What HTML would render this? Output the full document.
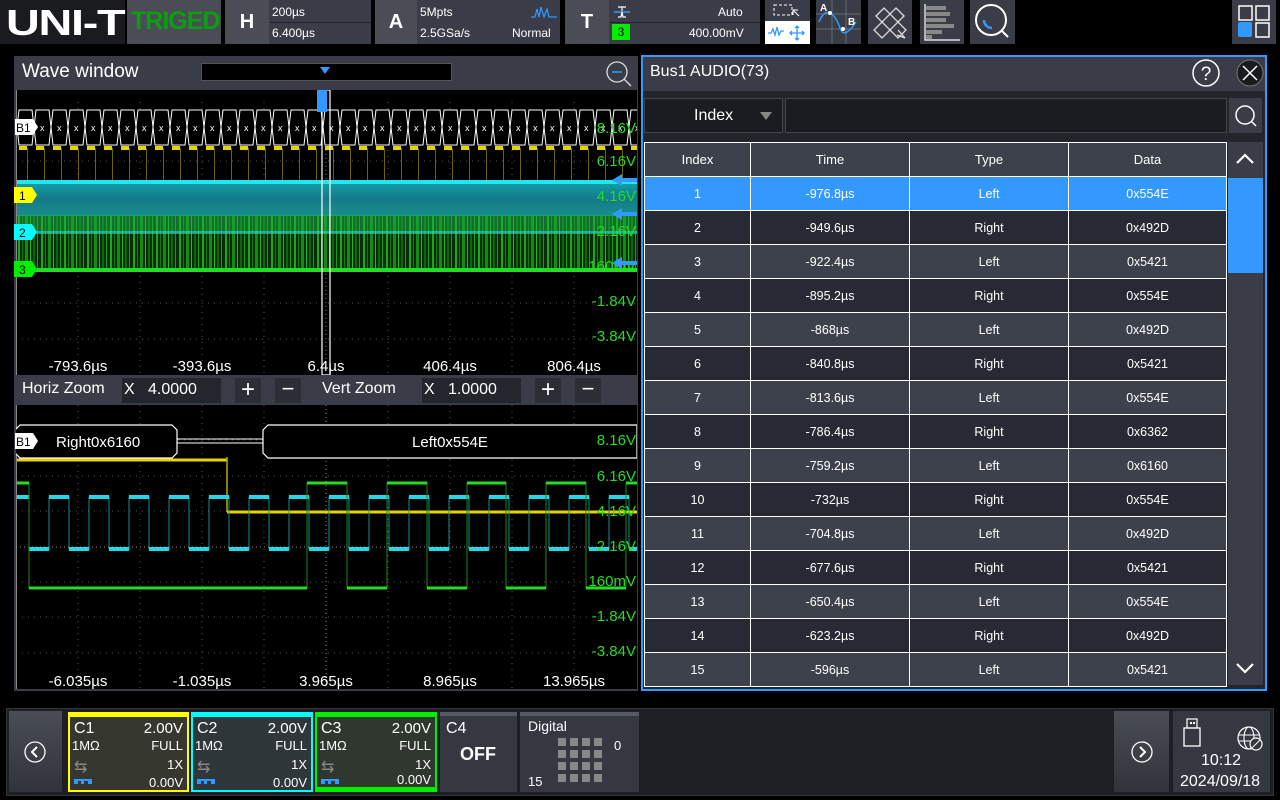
<!DOCTYPE html>
<html><head><meta charset="utf-8"><style>
*{box-sizing:border-box;margin:0;padding:0}
body{width:1280px;height:800px;background:#000;font-family:"Liberation Sans",sans-serif;color:#fff;position:relative;overflow:hidden}
.a{position:absolute}
.tb{position:absolute;top:0;height:44px;background:#3a3d47}
.lt{font-size:12px;color:#fff}
table{border-collapse:collapse;position:absolute;left:644px;top:142px;width:583px;font-size:12.5px;text-align:center}
td,th{border:1.5px solid #fff;height:34px;font-weight:normal}
th{background:#3d414b;font-size:13px}
tr.o td{background:#3d414b}
tr.e td{background:#272a34}
tr.s td{background:#3399ff}
.ch{position:absolute;top:712px;height:80px;background:#353833;font-size:14px}
.ch .r{position:absolute;right:4px}
.ch .l{position:absolute;left:4px}
.gl{font-size:15px;fill:#22dd22;font-family:"Liberation Sans",sans-serif}
.tl{font-size:15px;fill:#fff;font-family:"Liberation Sans",sans-serif}
</style></head><body>

<div class="a" style="left:0;top:0;width:125px;height:44px;background:#1a1b1f"></div>
<div class="a" style="left:6px;top:2px;font-size:36px;font-weight:bold;letter-spacing:-1px;color:#fff;transform:scaleX(1.3);transform-origin:left">UNI-T</div>
<div class="tb" style="left:127px;width:94px;background:#4a4d56"><div style="position:absolute;left:4px;top:7px;font-size:25px;font-weight:bold;color:#0c9d10;letter-spacing:-1px">TRIGED</div></div>

<div class="tb" style="left:225px;width:146px"></div>
<div class="a" style="left:225px;top:0;width:44px;height:44px;background:#4a4d56;font-size:20px;font-weight:bold;text-align:center;line-height:44px">H</div>
<div class="a" style="left:270px;top:22px;width:101px;height:1px;background:#22242a"></div>
<div class="a lt" style="left:272px;top:5px">200µs</div>
<div class="a lt" style="left:272px;top:26px">6.400µs</div>

<div class="tb" style="left:375px;width:185px"></div>
<div class="a" style="left:375px;top:0;width:42px;height:44px;background:#4a4d56;font-size:20px;font-weight:bold;text-align:center;line-height:44px">A</div>
<div class="a lt" style="left:420px;top:5px">5Mpts</div>
<div class="a lt" style="left:420px;top:26px">2.5GSa/s</div>
<div class="a lt" style="left:512px;top:26px">Normal</div>
<svg class="a" style="left:530px;top:5px" width="28" height="14"><path d="M1 12h4l2-8 2 8 2-10 3 10 3-8 2 8h8" stroke="#3399ff" fill="none" stroke-width="1.2"/></svg>

<div class="tb" style="left:565px;width:195px"></div>
<div class="a" style="left:565px;top:0;width:44px;height:44px;background:#4a4d56;font-size:20px;font-weight:bold;text-align:center;line-height:44px">T</div>
<div class="a" style="left:610px;top:22px;width:150px;height:1px;background:#22242a"></div>
<svg class="a" style="left:612px;top:4px" width="20" height="16"><path d="M2 8h16" stroke="#3399ff" stroke-width="1.5"/><path d="M6 3h8M10 3v4M6 13h3l1-5 1 5h3" stroke="#fff" fill="none" stroke-width="1.2"/></svg>
<div class="a" style="left:612px;top:24px;width:18px;height:16px;background:#00ee00;color:#000;font-size:12px;text-align:center;line-height:16px">3</div>
<div class="a lt" style="left:718px;top:5px">Auto</div>
<div class="a lt" style="left:689px;top:26px">400.00mV</div>

<div class="tb" style="left:765px;width:45px"></div>
<svg class="a" style="left:765px;top:0" width="45" height="44"><rect x="0" y="21" width="45" height="23" fill="#fff"/><rect x="9" y="5" width="18" height="10" fill="none" stroke="#fff" stroke-dasharray="3 2"/><path d="M28 10l6 6M28 10v5M28 10h5" stroke="#fff"/><path d="M3 33h3l2-4 2 6 2-8 2 8 2-4h3" stroke="#3399ff" fill="none" stroke-width="1.3"/><path d="M32 26v14M25 33h14M30 28l2-2 2 2M30 38l2 2 2-2M27 31l-2 2 2 2M37 31l2 2-2 2" stroke="#3399ff" fill="none" stroke-width="1.3"/></svg>
<div class="tb" style="left:816px;width:45px"></div>
<svg class="a" style="left:816px;top:0" width="45" height="44"><path d="M0 29h45M0 14h45M16 0v44M30 0v44" stroke="#666a73"/><path d="M3 22Q8 10 14 13 T24 28 T40 22" stroke="#3399ff" fill="none" stroke-width="1.5"/><circle cx="14" cy="13" r="2" fill="#fff"/><circle cx="27" cy="29" r="2" fill="#fff"/><text x="4" y="11" font-size="10" font-weight="bold" fill="#fff">A</text><text x="32" y="25" font-size="10" font-weight="bold" fill="#fff">B</text></svg>
<div class="tb" style="left:868px;width:44px"></div>
<svg class="a" style="left:868px;top:0" width="44" height="44"><g stroke="#ddd" fill="none" stroke-width="1.3"><path d="M8 16l8-8 22 22-8 8z"/><path d="M36 16l-8-8-22 22 8 8z"/><path d="M30 30l7 8-8-3"/></g></svg>
<div class="tb" style="left:920px;width:44px"></div>
<svg class="a" style="left:920px;top:0" width="44" height="44"><path d="M5 4v36h35" stroke="#fff" fill="none" stroke-width="1.2"/><g fill="#888"><rect x="6" y="6" width="20" height="4"/><rect x="6" y="12" width="24" height="4"/><rect x="6" y="18" width="20" height="4"/><rect x="6" y="24" width="28" height="4"/><rect x="6" y="30" width="16" height="4"/><rect x="6" y="35" width="6" height="4"/></g></svg>
<div class="tb" style="left:970px;width:45px"></div>
<svg class="a" style="left:970px;top:0" width="45" height="44"><circle cx="21" cy="20" r="15" stroke="#fff" stroke-width="2" fill="none"/><path d="M32 31l6 6" stroke="#fff" stroke-width="2"/><path d="M14 20a8 8 0 0 0 8 8" stroke="#3399ff" stroke-width="2.5" fill="none"/></svg>
<div class="tb" style="left:1232px;width:44px"></div>
<svg class="a" style="left:1232px;top:0" width="44" height="44"><rect x="7" y="6" width="13" height="14" fill="none" stroke="#fff" stroke-width="1.5"/><rect x="24" y="6" width="13" height="14" fill="none" stroke="#fff" stroke-width="1.5"/><rect x="6" y="22" width="14" height="15" rx="2" fill="#3399ff"/><rect x="24" y="23" width="13" height="14" fill="none" stroke="#fff" stroke-width="1.5"/></svg>

<div class="a" style="left:14px;top:56px;width:624px;height:635px;background:#3a3d47"></div>
<div class="a" style="left:22px;top:61px;font-size:19px">Wave window</div>
<div class="a" style="left:201px;top:63px;width:251px;height:18px;background:#000;border:1px solid #555"></div>
<div class="a" style="left:320px;top:67px;width:0;height:0;border-left:5px solid transparent;border-right:5px solid transparent;border-top:7px solid #3399ff"></div>
<svg class="a" style="left:603px;top:58px" width="30" height="30"><circle cx="14" cy="14" r="10" stroke="#ddd" fill="none" stroke-width="1.3"/><path d="M21 21l7 7" stroke="#ddd" stroke-width="1.3"/><path d="M9 14h10" stroke="#3399ff" stroke-width="1.5"/></svg>

<svg class="a" style="left:16px;top:90px" width="621" height="285">
<defs>
<pattern id="hex" x="1" y="0" width="17" height="285" patternUnits="userSpaceOnUse"><path d="M0 37L2 20L15 20L17 37L15 55L2 55Z" stroke="#fff" fill="#000" stroke-width="1"/><text x="6" y="41" font-size="9" fill="#fff" font-family="Liberation Sans">x</text></pattern>
<pattern id="yp" x="3" y="0" width="17" height="285" patternUnits="userSpaceOnUse"><rect x="0" y="56" width="8" height="4" fill="#e6d400"/><rect x="8" y="58" width="1" height="32" fill="#6c6200"/></pattern>
<pattern id="gs" width="23" height="285" patternUnits="userSpaceOnUse"><rect x="0" y="0" width="23" height="285" fill="#062e06"/><rect x="2" y="0" width="2" height="285" fill="#1ea51e"/><rect x="6" y="0" width="1" height="285" fill="#0f7a0f"/><rect x="9" y="0" width="3" height="285" fill="#138a13"/><rect x="14" y="0" width="1" height="285" fill="#25b825"/><rect x="17" y="0" width="2" height="285" fill="#0d650d"/><rect x="21" y="0" width="1" height="285" fill="#1a9a1a"/></pattern>
<linearGradient id="cy" x1="0" y1="0" x2="0" y2="1"><stop offset="0" stop-color="#11a0aa"/><stop offset=".5" stop-color="#137a88"/><stop offset="1" stop-color="#1a8f8a"/></linearGradient>
</defs>
<rect width="621" height="285" fill="#000"/>
<g stroke="#555" stroke-dasharray="1 5"><path d="M62 0v285M124 0v285M186 0v285M248 0v285M372 0v285M434 0v285M496 0v285M558 0v285M0 36h621M0 71h621M0 107h621M0 178h621M0 213h621M0 249h621"/></g>
<path d="M310 0v285M0 142h621" stroke="#777" stroke-dasharray="1 3"/>
<rect x="0" y="0" width="621" height="285" fill="url(#yp)"/>
<rect x="0" y="125" width="621" height="55" fill="url(#gs)"/>
<rect x="0" y="92" width="621" height="34" fill="url(#cy)"/>
<rect x="0" y="90" width="621" height="4" fill="#22e6f2"/>
<rect x="0" y="125" width="621" height="18" fill="#1bb04a" opacity=".5"/>
<rect x="0" y="141" width="621" height="3" fill="#2ae0ea" opacity=".55"/>
<rect x="0" y="178" width="621" height="4" fill="#22dd22"/>
<rect x="0" y="0" width="621" height="285" fill="url(#hex)"/>
<rect x="0" y="0" width="621" height="12" fill="#000"/>
<rect x="306" y="0" width="8" height="285" fill="none" stroke="#fff" stroke-width="1.2"/>
<rect x="301" y="0" width="10" height="22" fill="#3399ff"/>
<path d="M0 0v285" stroke="#888" stroke-width="2"/>
<g class="gl" text-anchor="end"><text x="620" y="43">8.16V</text><text x="620" y="76">6.16V</text><text x="620" y="111">4.16V</text><text x="620" y="146">2.16V</text><text x="620" y="181">160mV</text><text x="620" y="216">-1.84V</text><text x="620" y="251">-3.84V</text></g>
<g fill="#3399ff"><path d="M596 90l10-6v4h15v4h-15v4z"/><path d="M596 124l10-6v4h15v4h-15v4z"/><path d="M596 173l10-6v4h15v4h-15v4z"/></g>
<g class="tl" text-anchor="middle"><text x="62" y="281">-793.6µs</text><text x="186" y="281">-393.6µs</text><text x="310" y="281">6.4µs</text><text x="434" y="281">406.4µs</text><text x="558" y="281">806.4µs</text></g>
</svg>
<svg class="a" style="left:14px;top:118px" width="32" height="160"><path d="M1 1h18l5 8-5 8H1z" fill="#fff"/><text x="2" y="14" font-size="12" fill="#000">B1</text>
<path d="M0 69h18l5 8-5 8H0z" fill="#ffff00"/><text x="5" y="82" font-size="12" fill="#000">1</text>
<path d="M0 106h18l5 8-5 8H0z" fill="#00ffff"/><text x="5" y="119" font-size="12" fill="#000">2</text>
<path d="M0 143h18l5 8-5 8H0z" fill="#00ee00"/><text x="5" y="156" font-size="12" fill="#000">3</text></svg>

<div class="a" style="left:22px;top:380px;font-size:16px">Horiz Zoom</div>
<div class="a" style="left:122px;top:378px;width:99px;height:25px;background:#24262d"></div>
<div class="a" style="left:124px;top:381px;font-size:16px">X &nbsp; 4.0000</div>
<div class="a" style="left:235px;top:378px;width:26px;height:25px;background:#2c2e35;font-size:24px;text-align:center;line-height:24px">+</div>
<div class="a" style="left:275px;top:378px;width:26px;height:25px;background:#2c2e35;font-size:22px;text-align:center;line-height:22px">−</div>
<div class="a" style="left:322px;top:380px;font-size:16px">Vert Zoom</div>
<div class="a" style="left:422px;top:378px;width:99px;height:25px;background:#24262d"></div>
<div class="a" style="left:424px;top:381px;font-size:16px">X &nbsp; 1.0000</div>
<div class="a" style="left:535px;top:378px;width:26px;height:25px;background:#2c2e35;font-size:24px;text-align:center;line-height:24px">+</div>
<div class="a" style="left:575px;top:378px;width:26px;height:25px;background:#2c2e35;font-size:22px;text-align:center;line-height:22px">−</div>

<svg class="a" style="left:16px;top:405px" width="621" height="284">
<rect width="621" height="284" fill="#000"/>
<g stroke="#555" stroke-dasharray="1 5"><path d="M62 0v284M124 0v284M186 0v284M248 0v284M372 0v284M434 0v284M496 0v284M558 0v284M0 35h621M0 71h621M0 106h621M0 177h621M0 212h621M0 248h621"/></g>
<path d="M310 0v284M0 142h621" stroke="#888" stroke-dasharray="1 3"/>
<path d="M0 55h211" stroke="#e6d400" stroke-width="3"/>
<path d="M211 52v55" stroke="#bba800" stroke-width="1.5"/>
<path d="M211 107h410" stroke="#e6d400" stroke-width="3"/>
<polyline fill="none" stroke="#148b95" stroke-width="1" points="0,92 13,92 13,144 33,144 33,92 53,92 53,144 73,144 73,92 93,92 93,144 113,144 113,92 133,92 133,144 153,144 153,92 173,92 173,144 193,144 193,92 213,92 213,144 233,144 233,92 253,92 253,144 273,144 273,92 293,92 293,144 313,144 313,92 333,92 333,144 353,144 353,92 373,92 373,144 393,144 393,92 413,92 413,144 433,144 433,92 453,92 453,144 473,144 473,92 493,92 493,144 513,144 513,92 533,92 533,144 553,144 553,92 573,92 573,144 593,144 593,92 613,92 613,144 621,144"/>
<g fill="#22d8e6"><rect x="0" y="90" width="13" height="4"/><rect x="33" y="90" width="20" height="4"/><rect x="73" y="90" width="20" height="4"/><rect x="113" y="90" width="20" height="4"/><rect x="153" y="90" width="20" height="4"/><rect x="193" y="90" width="20" height="4"/><rect x="233" y="90" width="20" height="4"/><rect x="273" y="90" width="20" height="4"/><rect x="313" y="90" width="20" height="4"/><rect x="353" y="90" width="20" height="4"/><rect x="393" y="90" width="20" height="4"/><rect x="433" y="90" width="20" height="4"/><rect x="473" y="90" width="20" height="4"/><rect x="513" y="90" width="20" height="4"/><rect x="553" y="90" width="20" height="4"/><rect x="593" y="90" width="20" height="4"/>
<rect x="13" y="142" width="20" height="4"/><rect x="53" y="142" width="20" height="4"/><rect x="93" y="142" width="20" height="4"/><rect x="133" y="142" width="20" height="4"/><rect x="173" y="142" width="20" height="4"/><rect x="213" y="142" width="20" height="4"/><rect x="253" y="142" width="20" height="4"/><rect x="293" y="142" width="20" height="4"/><rect x="333" y="142" width="20" height="4"/><rect x="373" y="142" width="20" height="4"/><rect x="413" y="142" width="20" height="4"/><rect x="453" y="142" width="20" height="4"/><rect x="493" y="142" width="20" height="4"/><rect x="533" y="142" width="20" height="4"/><rect x="573" y="142" width="20" height="4"/><rect x="613" y="142" width="8" height="4"/></g>
<polyline fill="none" stroke="#168a16" stroke-width="1" points="0,78 13,78 13,183 291,183 291,78 331,78 331,183 371,183 371,78 411,78 411,183 451,183 451,78 490,78 490,183 530,183 530,78 570,78 570,183 610,183 610,78 621,78"/>
<path d="M0 78h13M291 78h40M371 78h40M451 78h39M530 78h40M610 78h11M13 183h278M331 183h40M411 183h40M490 183h40M570 183h40" stroke="#22dd22" stroke-width="3"/>
<path d="M0 0v284" stroke="#888" stroke-width="2"/>
<path d="M4 20h152l5 5v23l-5 5H4l-5-5V25z" fill="#000" stroke="#fff" stroke-width="1.2"/>
<path d="M161 34h86M161 38h86" stroke="#fff"/>
<path d="M252 20h369v33H252l-5-5V25z" fill="#000" stroke="#fff" stroke-width="1.2"/>
<text x="40" y="42" class="tl" font-size="14">Right0x6160</text>
<text x="434" y="42" class="tl" font-size="14" text-anchor="middle">Left0x554E</text>
<g class="gl" text-anchor="end"><text x="620" y="40">8.16V</text><text x="620" y="76">6.16V</text><text x="620" y="111">4.16V</text><text x="620" y="146">2.16V</text><text x="620" y="181">160mV</text><text x="620" y="216">-1.84V</text><text x="620" y="251">-3.84V</text></g>
<g class="tl" text-anchor="middle"><text x="62" y="281">-6.035µs</text><text x="186" y="281">-1.035µs</text><text x="310" y="281">3.965µs</text><text x="434" y="281">8.965µs</text><text x="558" y="281">13.965µs</text></g>
</svg>
<svg class="a" style="left:14px;top:432px" width="30" height="20"><path d="M1 1h18l5 8-5 8H1z" fill="#fff"/><text x="2" y="14" font-size="12" fill="#000">B1</text></svg>

<div class="a" style="left:641px;top:55px;width:626px;height:636px;border:2px solid #3399ff;background:#22252c"></div>
<div class="a" style="left:643px;top:57px;width:622px;height:34px;background:#3a3d47"></div>
<div class="a" style="left:650px;top:63px;font-size:16px">Bus1 AUDIO(73)</div>
<svg class="a" style="left:1190px;top:58px" width="76" height="30"><circle cx="16" cy="15" r="13" stroke="#fff" stroke-width="1.5" fill="none"/><text x="16" y="22" font-size="19" fill="#fff" text-anchor="middle">?</text><circle cx="60" cy="15" r="13" fill="#1a1b1f" stroke="#777"/><path d="M53 8l14 14M67 8l-14 14" stroke="#fff" stroke-width="1.5"/></svg>
<div class="a" style="left:644px;top:98px;width:139px;height:35px;background:#1b1c21;border:1px solid #444"></div>
<div class="a" style="left:694px;top:107px;font-size:16px">Index</div>
<div class="a" style="left:760px;top:112px;width:0;height:0;border-left:6px solid transparent;border-right:6px solid transparent;border-top:8px solid #888"></div>
<div class="a" style="left:785px;top:98px;width:442px;height:35px;background:#1b1c21;border:1px solid #444"></div>
<div class="a" style="left:1229px;top:98px;width:33px;height:35px;background:#3a3d47"></div>
<svg class="a" style="left:1232px;top:103px" width="28" height="26"><circle cx="13" cy="12" r="9" stroke="#fff" stroke-width="1.5" fill="none"/><path d="M19 18l5 5" stroke="#fff" stroke-width="1.5"/></svg>
<div class="a" style="left:1228px;top:142px;width:35px;height:543px;background:#3a3d47"></div>
<div class="a" style="left:1228px;top:178px;width:35px;height:95px;background:#3399ff"></div>
<svg class="a" style="left:1228px;top:142px" width="35" height="34"><path d="M9 21l8-8 8 8" stroke="#fff" stroke-width="2.2" fill="none"/></svg>
<svg class="a" style="left:1228px;top:652px" width="35" height="34"><path d="M9 12l8 8 8-8" stroke="#fff" stroke-width="2.2" fill="none"/></svg>
<table>
<tr><th style="width:106px">Index</th><th style="width:159px">Time</th><th style="width:159px">Type</th><th>Data</th></tr>
<tr class="s"><td>1</td><td>-976.8µs</td><td>Left</td><td>0x554E</td></tr>
<tr class="e"><td>2</td><td>-949.6µs</td><td>Right</td><td>0x492D</td></tr>
<tr class="o"><td>3</td><td>-922.4µs</td><td>Left</td><td>0x5421</td></tr>
<tr class="e"><td>4</td><td>-895.2µs</td><td>Right</td><td>0x554E</td></tr>
<tr class="o"><td>5</td><td>-868µs</td><td>Left</td><td>0x492D</td></tr>
<tr class="e"><td>6</td><td>-840.8µs</td><td>Right</td><td>0x5421</td></tr>
<tr class="o"><td>7</td><td>-813.6µs</td><td>Left</td><td>0x554E</td></tr>
<tr class="e"><td>8</td><td>-786.4µs</td><td>Right</td><td>0x6362</td></tr>
<tr class="o"><td>9</td><td>-759.2µs</td><td>Left</td><td>0x6160</td></tr>
<tr class="e"><td>10</td><td>-732µs</td><td>Right</td><td>0x554E</td></tr>
<tr class="o"><td>11</td><td>-704.8µs</td><td>Left</td><td>0x492D</td></tr>
<tr class="e"><td>12</td><td>-677.6µs</td><td>Right</td><td>0x5421</td></tr>
<tr class="o"><td>13</td><td>-650.4µs</td><td>Left</td><td>0x554E</td></tr>
<tr class="e"><td>14</td><td>-623.2µs</td><td>Right</td><td>0x492D</td></tr>
<tr class="o"><td>15</td><td>-596µs</td><td>Left</td><td>0x5421</td></tr>
</table>

<div class="a" style="left:6px;top:708px;width:1268px;height:88px;background:#1d1f24;border:1px solid #333"></div>
<div class="a" style="left:9px;top:711px;width:53px;height:81px;background:linear-gradient(#4a4d55,#30333a)"></div>
<svg class="a" style="left:22px;top:739px" width="26" height="26"><circle cx="13" cy="13" r="10" stroke="#fff" stroke-width="1.3" fill="none"/><path d="M15 8l-5 5 5 5" stroke="#fff" stroke-width="2" fill="none"/></svg>

<div class="ch" style="left:68px;width:121px;border:2px solid #ffff00;border-top-width:5px;background:#36372f"><span class="l" style="top:3px;font-size:16px">C1</span><span class="r" style="top:3px;font-size:15px">2.00V</span><span class="l" style="top:21px;left:2px;font-size:13px">1MΩ</span><span class="r" style="top:21px;font-size:13px">FULL</span><span class="l" style="top:40px;color:#888;font-size:16px">⇆</span><span class="r" style="top:40px;font-size:13px">1X</span><span class="l" style="top:62px;width:18px;height:5px;border-top:2px solid #3399ff;border-bottom:3px dotted #3399ff"></span><span class="r" style="top:58px;font-size:13px">0.00V</span></div>
<div class="ch" style="left:191px;width:122px;border:2px solid #00ffff;border-top-width:5px;background:#30373a"><span class="l" style="top:3px;font-size:16px">C2</span><span class="r" style="top:3px;font-size:15px">2.00V</span><span class="l" style="top:21px;left:2px;font-size:13px">1MΩ</span><span class="r" style="top:21px;font-size:13px">FULL</span><span class="l" style="top:40px;color:#888;font-size:16px">⇆</span><span class="r" style="top:40px;font-size:13px">1X</span><span class="l" style="top:62px;width:18px;height:5px;border-top:2px solid #3399ff;border-bottom:3px dotted #3399ff"></span><span class="r" style="top:58px;font-size:13px">0.00V</span></div>
<div class="ch" style="left:315px;width:122px;border:2px solid #00ee00;border-top-width:5px;border-bottom-width:5px;background:#30372f"><span class="l" style="top:3px;font-size:16px">C3</span><span class="r" style="top:3px;font-size:15px">2.00V</span><span class="l" style="top:21px;left:2px;font-size:13px">1MΩ</span><span class="r" style="top:21px;font-size:13px">FULL</span><span class="l" style="top:40px;color:#888;font-size:16px">⇆</span><span class="r" style="top:40px;font-size:13px">1X</span><span class="l" style="top:62px;width:18px;height:5px;border-top:2px solid #3399ff;border-bottom:3px dotted #3399ff"></span><span class="r" style="top:55px;font-size:13px">0.00V</span></div>
<div class="ch" style="left:440px;width:77px;background:#353841;border-top:4px solid #555a62"><span class="l" style="top:4px;font-size:16px;left:6px">C4</span><span style="position:absolute;left:20px;top:28px;font-size:18px;font-weight:bold">OFF</span></div>
<div class="ch" style="left:520px;width:119px;background:#353841;border-top:4px solid #555a62"><span class="l" style="top:2px;font-size:14px;left:8px">Digital</span><span style="position:absolute;left:94px;top:22px;font-size:13px">0</span><span style="position:absolute;left:8px;top:58px;font-size:13px">15</span>
<svg style="position:absolute;left:38px;top:22px" width="46" height="46"><g fill="#888"><rect x="0" y="0" width="8" height="8"/><rect x="12" y="0" width="8" height="8"/><rect x="24" y="0" width="8" height="8"/><rect x="36" y="0" width="8" height="8"/><rect x="0" y="12" width="8" height="8"/><rect x="12" y="12" width="8" height="8"/><rect x="24" y="12" width="8" height="8"/><rect x="36" y="12" width="8" height="8"/><rect x="0" y="24" width="8" height="8"/><rect x="12" y="24" width="8" height="8"/><rect x="24" y="24" width="8" height="8"/><rect x="36" y="24" width="8" height="8"/><rect x="0" y="36" width="8" height="8"/><rect x="12" y="36" width="8" height="8"/><rect x="24" y="36" width="8" height="8"/><rect x="36" y="36" width="8" height="8"/></g></svg></div>

<div class="a" style="left:1114px;top:711px;width:55px;height:81px;background:linear-gradient(#4a4d55,#30333a)"></div>
<svg class="a" style="left:1129px;top:739px" width="26" height="26"><circle cx="13" cy="13" r="10" stroke="#fff" stroke-width="1.3" fill="none"/><path d="M11 8l5 5-5 5" stroke="#fff" stroke-width="2" fill="none"/></svg>
<div class="a" style="left:1173px;top:711px;width:97px;height:81px;background:#353841"></div>
<svg class="a" style="left:1183px;top:718px" width="84" height="34"><rect x="4" y="1" width="10" height="9" fill="none" stroke="#fff" stroke-width="1.2"/><rect x="7" y="4" width="2" height="2" fill="#fff"/><rect x="10" y="4" width="2" height="2" fill="#fff"/><rect x="1" y="10" width="16" height="18" fill="none" stroke="#fff" stroke-width="1.3"/><circle cx="66" cy="20" r="11" fill="none" stroke="#fff" stroke-width="1.2"/><ellipse cx="66" cy="20" rx="5" ry="11" fill="none" stroke="#fff" stroke-width="1.1"/><path d="M55 17h22M55 23h22" stroke="#fff"/><circle cx="73" cy="26" r="6" fill="#353841" stroke="#fff" stroke-width="1.2"/><path d="M69 30l8-8" stroke="#fff"/></svg>
<div class="a" style="left:1201px;top:752px;font-size:16px">10:12</div>
<div class="a" style="left:1180px;top:773px;font-size:16px">2024/09/18</div>
</body></html>
